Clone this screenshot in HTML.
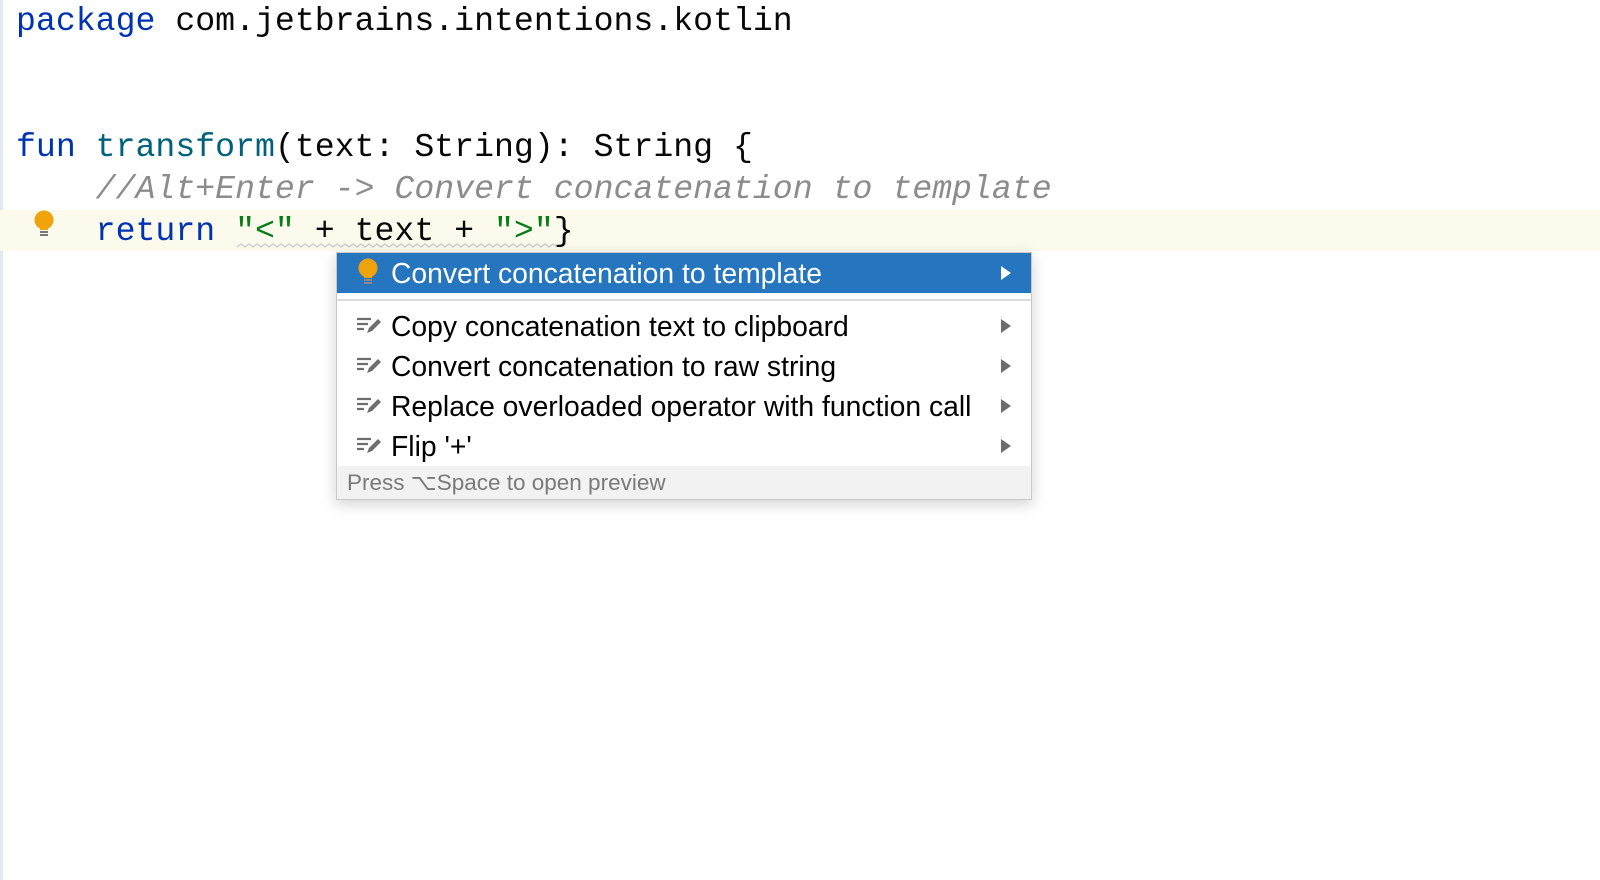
<!DOCTYPE html>
<html><head><style>
body{margin:0;width:1600px;height:880px;background:#fff;position:relative;overflow:hidden;font-family:"Liberation Sans",sans-serif}
.gut{position:absolute;left:0;top:0;width:3px;height:880px;background:#e4e8ee}
.hl{position:absolute;left:0;top:210px;width:1600px;height:41px;background:#fcfaed}
.code{position:absolute;left:16px;font-family:"Liberation Mono",monospace;font-size:33.2px;line-height:42px;white-space:pre;color:#080808}
.k{color:#0033b3}.f{color:#00627a}.s{color:#067d17}.c{color:#8c8c8c;font-style:italic}
.menu{position:absolute;left:336px;top:252px;width:694px;height:246px;background:#fff;border:1px solid #c8c8c8;box-shadow:0 4px 14px rgba(0,0,0,.18);font-size:28.3px}
.row{position:absolute;left:0;width:694px;height:40px;line-height:40px}
.row span.t{position:absolute;left:54px}
.arr{position:absolute;left:664px;top:13px;width:0;height:0;border-left:10px solid #6e6e6e;border-top:7px solid transparent;border-bottom:7px solid transparent}
.sel{background:#2675bf;color:#fff}
.sel .arr{border-left-color:#fff}
.ic{position:absolute;left:19px;top:10px}
.foot{position:absolute;left:0;top:213px;width:694px;height:33px;background:#f2f2f2;color:#7a7a7a;font-size:22.5px;line-height:33px}
</style></head><body>
<div class="gut"></div>
<div class="hl"></div>
<div class="code" style="top:0"><span class="k">package</span> com.jetbrains.intentions.kotlin</div>
<div class="code" style="top:126px"><span class="k">fun</span> <span class="f">transform</span>(text: String): String {</div>
<div class="code" style="top:168px">    <span class="c">//Alt+Enter -&gt; Convert concatenation to template</span></div>
<div class="code" style="top:210px">    <span class="k">return</span> <span class="s">"&lt;"</span> + text + <span class="s">"&gt;"</span>}</div>
<svg style="position:absolute;left:237px;top:243px" width="320" height="8"><path d="M0 4 l4 -3 l4 3 l4 -3 l4 3 l4 -3 l4 3 l4 -3 l4 3 l4 -3 l4 3 l4 -3 l4 3 l4 -3 l4 3 l4 -3 l4 3 l4 -3 l4 3 l4 -3 l4 3 l4 -3 l4 3 l4 -3 l4 3 l4 -3 l4 3 l4 -3 l4 3 l4 -3 l4 3 l4 -3 l4 3 l4 -3 l4 3 l4 -3 l4 3 l4 -3 l4 3 l4 -3 l4 3 l4 -3 l4 3 l4 -3 l4 3 l4 -3 l4 3 l4 -3 l4 3 l4 -3 l4 3 l4 -3 l4 3 l4 -3 l4 3 l4 -3 l4 3 l4 -3 l4 3 l4 -3 l4 3 l4 -3 l4 3 l4 -3 l4 3 l4 -3 l4 3 l4 -3 l4 3 l4 -3 l4 3 l4 -3 l4 3 l4 -3 l4 3 l4 -3 l4 3 l4 -3 l4 3 l4 -3 l4 3 l4 -3 l4 3 l4 -3 l4 3 l4 -3 l4 3" fill="none" stroke="#c8c8c8" stroke-width="1.2"/></svg>
<svg style="position:absolute;left:33px;top:210px" width="22" height="28"><circle cx="11" cy="10" r="9.5" fill="#f0a30a"/><rect x="7" y="15" width="8" height="5" fill="#f0a30a"/><rect x="7" y="21" width="8" height="2" fill="#777"/><rect x="7" y="24" width="8" height="2" fill="#777"/></svg>
<div class="menu">
 <div class="row sel" style="top:0"><svg class="ic" width="22" height="28" style="top:5px;left:20px"><circle cx="11" cy="10" r="9.5" fill="#f0a30a"/><rect x="7" y="15" width="8" height="5" fill="#f0a30a"/><rect x="7" y="21" width="8" height="2" fill="#888"/><rect x="7" y="24" width="8" height="2" fill="#888"/></svg><span class="t">Convert concatenation to template</span><i class="arr"></i></div>
 <div style="position:absolute;left:0;top:46px;width:694px;height:2px;background:#dcdcdc"></div>
 <div class="row" style="top:53px"><svg class="ic" width="26" height="20"><path d="M1 3h14M1 8h11M1 13h7" stroke="#6e6e6e" stroke-width="2.2"/><path d="M11 17l2-5 9-9 3 3-9 9z" fill="#6e6e6e"/></svg><span class="t">Copy concatenation text to clipboard</span><i class="arr"></i></div>
 <div class="row" style="top:93px"><svg class="ic" width="26" height="20"><path d="M1 3h14M1 8h11M1 13h7" stroke="#6e6e6e" stroke-width="2.2"/><path d="M11 17l2-5 9-9 3 3-9 9z" fill="#6e6e6e"/></svg><span class="t">Convert concatenation to raw string</span><i class="arr"></i></div>
 <div class="row" style="top:133px"><svg class="ic" width="26" height="20"><path d="M1 3h14M1 8h11M1 13h7" stroke="#6e6e6e" stroke-width="2.2"/><path d="M11 17l2-5 9-9 3 3-9 9z" fill="#6e6e6e"/></svg><span class="t">Replace overloaded operator with function call</span><i class="arr"></i></div>
 <div class="row" style="top:173px"><svg class="ic" width="26" height="20"><path d="M1 3h14M1 8h11M1 13h7" stroke="#6e6e6e" stroke-width="2.2"/><path d="M11 17l2-5 9-9 3 3-9 9z" fill="#6e6e6e"/></svg><span class="t">Flip '+'</span><i class="arr"></i></div>
 <div class="foot"><span style="margin-left:10px">Press ⌥Space to open preview</span></div>
</div>
</body></html>
